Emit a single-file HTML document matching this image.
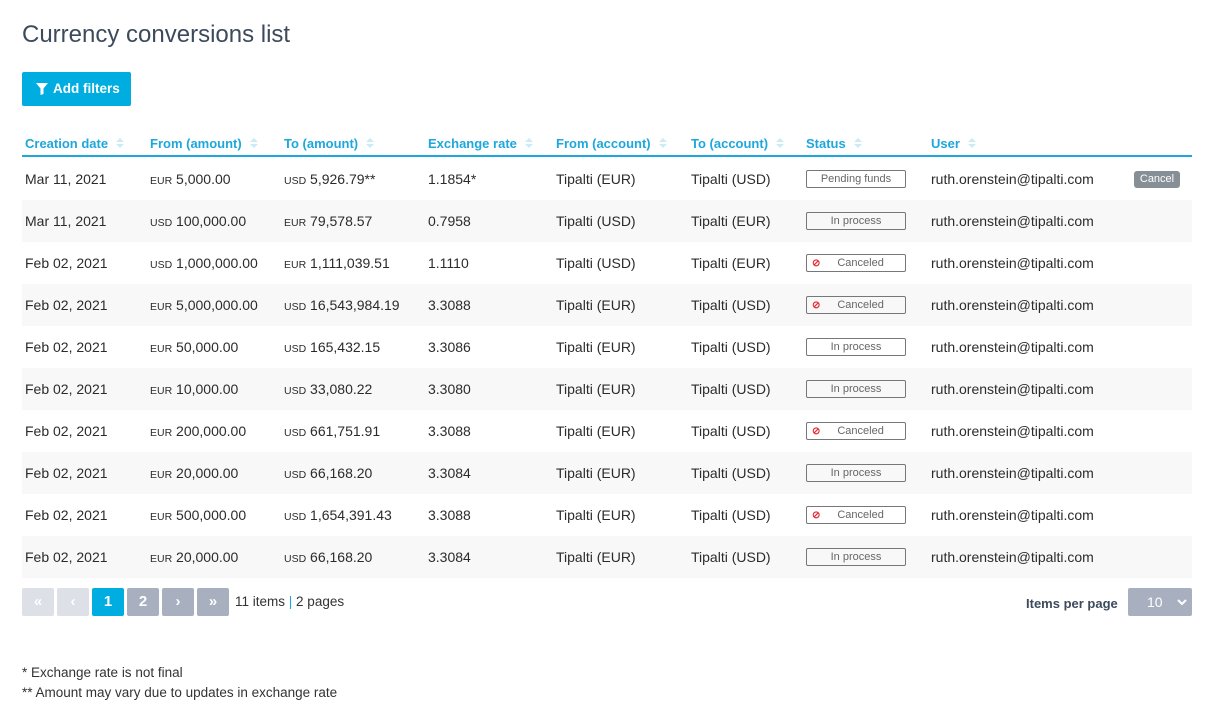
<!DOCTYPE html><html><head><style>
body{margin:0;background:#fff;font-family:"Liberation Sans",sans-serif;color:#2b2b2b;width:1221px;height:715px;overflow:hidden;position:relative}
.a{position:absolute;white-space:nowrap}
h1{position:absolute;left:22px;top:21px;margin:0;font-weight:normal;font-size:24px;color:#3d4a5c}
.btn{left:22px;top:72px;width:109px;height:34px;background:#00ade0;border-radius:2px;color:#fff;font-size:13.5px;line-height:34px;font-weight:bold}
.th{top:136px;font-size:13px;color:#1ea7dc;font-weight:bold}
.th i{display:inline-block;width:0;margin-left:8px;vertical-align:middle;border-left:4px solid transparent;border-right:4px solid transparent;border-bottom:4px solid #c9ecf8;position:relative;top:-5px}
.th i:after{content:"";position:absolute;left:-4px;top:6px;border-left:4px solid transparent;border-right:4px solid transparent;border-top:4px solid #c9ecf8}
.line{left:22px;top:155px;width:1170px;height:2px;background:#1ea7dc}
.row{position:absolute;left:22px;width:1170px;height:42px;font-size:14px}
.row.g{background:#f8f8f8}
.row span{position:absolute;top:13px;white-space:nowrap}
.row small{font-size:10.5px}
.st{left:784px;top:12px!important;width:98px;height:16px;border:1px solid #777;border-radius:2px;font-size:11px;color:#666;text-align:center;line-height:17px}
.cx{color:#e0303a;font-size:10px;position:absolute;left:5px}
.cb{left:1112px;top:13px!important;width:46px;height:17px;background:#868e96;color:#fff;border-radius:3px;font-size:11px;text-align:center;line-height:17px}
.pg{top:588px;width:32px;height:28px;border-radius:2px;color:#fff;text-align:center;line-height:28px;font-size:15px;font-weight:bold}
</style></head><body>
<h1>Currency conversions list</h1>
<div class="a btn"><svg width="12" height="12" viewBox="0 0 12 12" style="position:absolute;left:14px;top:11px"><path d="M0 0H12L7.5 5.5V11L4.5 12V5.5Z" fill="#fff"/></svg><span style="position:absolute;left:31px">Add filters</span></div>
<div class="a th" style="left:25px">Creation date<i></i></div>
<div class="a th" style="left:150px">From (amount)<i></i></div>
<div class="a th" style="left:284px">To (amount)<i></i></div>
<div class="a th" style="left:428px">Exchange rate<i></i></div>
<div class="a th" style="left:556px">From (account)<i></i></div>
<div class="a th" style="left:691px">To (account)<i></i></div>
<div class="a th" style="left:806px">Status<i></i></div>
<div class="a th" style="left:931px">User<i></i></div>
<div class="a line"></div>
<div id="rows"></div>
<script>
var d=[["Mar 11, 2021","EUR","5,000.00","USD","5,926.79**","1.1854*","EUR","USD","Pending funds"],
["Mar 11, 2021","USD","100,000.00","EUR","79,578.57","0.7958","USD","EUR","In process"],
["Feb 02, 2021","USD","1,000,000.00","EUR","1,111,039.51","1.1110","USD","EUR","Canceled"],
["Feb 02, 2021","EUR","5,000,000.00","USD","16,543,984.19","3.3088","EUR","USD","Canceled"],
["Feb 02, 2021","EUR","50,000.00","USD","165,432.15","3.3086","EUR","USD","In process"],
["Feb 02, 2021","EUR","10,000.00","USD","33,080.22","3.3080","EUR","USD","In process"],
["Feb 02, 2021","EUR","200,000.00","USD","661,751.91","3.3088","EUR","USD","Canceled"],
["Feb 02, 2021","EUR","20,000.00","USD","66,168.20","3.3084","EUR","USD","In process"],
["Feb 02, 2021","EUR","500,000.00","USD","1,654,391.43","3.3088","EUR","USD","Canceled"],
["Feb 02, 2021","EUR","20,000.00","USD","66,168.20","3.3084","EUR","USD","In process"]];
var h="";d.forEach(function(r,i){h+='<div class="row'+(i%2?' g':'')+'" style="top:'+(158+i*42)+'px">'+
'<span style="left:3px">'+r[0]+'</span><span style="left:128px"><small>'+r[1]+'</small> '+r[2]+'</span>'+
'<span style="left:262px"><small>'+r[3]+'</small> '+r[4]+'</span><span style="left:406px">'+r[5]+'</span>'+
'<span style="left:534px">Tipalti ('+r[6]+')</span><span style="left:669px">Tipalti ('+r[7]+')</span>'+
'<span class="st">'+(r[8]=="Canceled"?'<b class="cx">&#8856;</b>&nbsp;&nbsp;&nbsp;':'')+r[8]+'</span>'+
'<span style="left:909px">ruth.orenstein@tipalti.com</span>'+(i==0?'<span class="cb">Cancel</span>':'')+'</div>'});
document.getElementById("rows").innerHTML=h;
</script>
<div class="a pg" style="left:22px;background:#dde0e6">&laquo;</div>
<div class="a pg" style="left:57px;background:#dde0e6">&lsaquo;</div>
<div class="a pg" style="left:92px;background:#00ade0">1</div>
<div class="a pg" style="left:127px;background:#a8b0bf">2</div>
<div class="a pg" style="left:162px;background:#a8b0bf">&rsaquo;</div>
<div class="a pg" style="left:197px;background:#a8b0bf">&raquo;</div>
<div class="a" style="left:235px;top:594px;font-size:13.5px;color:#333">11 items <span style="color:#1ea7dc">|</span> 2 pages</div>
<div class="a" style="left:1026px;top:596px;font-size:13px;font-weight:bold;color:#3d4a5c">Items per page</div>
<div class="a" style="left:1128px;top:588px;width:64px;height:28px;background:#a8b0bf;border-radius:2px;color:#fff;font-size:14px;line-height:28px"><span style="position:absolute;left:19px">10</span><svg width="10" height="6" style="position:absolute;left:49px;top:11px"><path d="M1 1L5 5L9 1" stroke="#fff" stroke-width="2" fill="none"/></svg></div>
<div class="a" style="left:22px;top:665px;font-size:13.5px;color:#333">* Exchange rate is not final</div>
<div class="a" style="left:22px;top:685px;font-size:13.5px;color:#333">** Amount may vary due to updates in exchange rate</div>
</body></html>
